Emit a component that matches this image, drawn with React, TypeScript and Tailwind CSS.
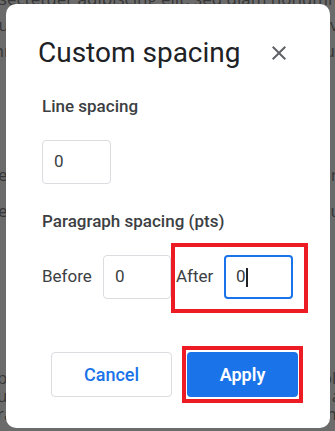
import React from "react";

function CloseIcon() {
  return (
    <svg width="24" height="24" viewBox="0 0 24 24" aria-hidden="true">
      <path
        fill="#5f6368"
        d="M19 6.41L17.59 5 12 10.59 6.41 5 5 6.41 10.59 12 5 17.59 6.41 19 12 13.41 17.59 19 19 17.59 13.41 12z"
      />
    </svg>
  );
}

export default function App() {
  return (
    <div className="relative w-[335px] h-[431px] overflow-hidden bg-[#6b6b6b]">
      {/* document text behind the modal overlay */}
      <div className="whitespace-nowrap text-[17px] text-[#363636] font-['Open_Sans','Liberation_Sans',sans-serif]">
        <div className="-mt-[14px] -ml-[30px] leading-[26px]">
          <div>consectetuer adipiscing elit, sed diam nonummy nibh euismod</div>
          <div>aliquam erat volutpat. Ut wisi enim ad minim veniam, quis</div>
          <div>commodo consequat. Duis autem vel eum iriure dolor in</div>
        </div>
        <div className="mt-[93px] -ml-[2px] leading-[36px]">
          <div>exerci tation ullamcorper suscipit lobortis nisl ut aliquip ex ea</div>
          <div>eu feugiat nulla facilisis at vero eros et accumsan et iusto odio dignissim qui blandit praesent luptatum zzril delenit augue duis dolore te feugait nulla facilisi. Lorem ipsum dolor sit amet, consectetuer a,</div>
        </div>
        <div className="mt-[140px] -ml-[3px] leading-[18px]">
          <div>bibendum tempor incidunt ut labore et dolore magna aliqui</div>
          <div>uismod tincidunt ut laoreet dolore magna aliquam erat v;</div>
          <div>rat volutpat. Ut wisi enim ad minim veniam, quis nostrud e</div>
        </div>
      </div>

      {/* dialog */}
      <div className="absolute left-[6px] top-[4px] w-[324px] h-[424px] rounded-[10px] bg-white font-['Roboto','Liberation_Sans',sans-serif]">
        <div className="pt-[31px]">
          <div className="flex items-center justify-between pl-[32px] pr-[39px] h-[36px]">
            <div className="text-[28px] leading-[36px] text-[#202124] font-normal">Custom spacing</div>
            <CloseIcon />
          </div>

          <div className="pl-[36px]">
            <div className="mt-[23px] text-[17px] leading-[24px] font-medium text-[#3c4043]">Line spacing</div>
            <div className="mt-[22px] w-[69px] h-[44px] rounded-[4px] border border-[#dadce0] flex items-center pl-[11px] text-[17px] text-[#3c4043]">
              0
            </div>

            <div className="mt-[25px] text-[17px] leading-[24px] font-medium text-[#3c4043]">
              Paragraph spacing (pts)
            </div>

            <div className="mt-[10px] flex items-start">
              <div className="mt-[12px] w-[61px] h-[44px] flex items-center text-[17px] text-[#3c4043]">Before</div>
              <div className="mt-[12px] w-[68px] h-[44px] rounded-[4px] border border-[#dadce0] flex items-center pl-[11px] text-[17px] text-[#3c4043]">
                0
              </div>
              <div className="flex items-center border-[4px] border-[#ed1c24] pl-[1px] pr-[11px] pt-[8px] pb-[10px]">
                <div className="w-[48px] h-[44px] flex items-center text-[17px] text-[#3c4043]">After</div>
                <div className="w-[69px] h-[44px] rounded-[4px] border-2 border-[#1a73e8] flex items-center pl-[10px] text-[17px] text-[#3c4043]">
                  <span>0</span>
                  <span className="ml-[0px] w-[2px] h-[19px] bg-[#202124]"></span>
                </div>
              </div>
            </div>
          </div>

          <div className="mt-[33px] flex items-start justify-end pr-[27px] gap-[10px]">
            <button className="mt-[6px] w-[121px] h-[45px] rounded-[4px] border border-[#dadce0] bg-white text-[18px] font-medium text-[#1a73e8]">
              Cancel
            </button>
            <div className="border-[4px] border-[#ed1c24] px-[1px] py-[2px]">
              <button className="block w-[111px] h-[45px] rounded-[4px] bg-[#1a73e8] text-[18px] font-semibold text-white">
                Apply
              </button>
            </div>
          </div>
        </div>
      </div>
    </div>
  );
}
